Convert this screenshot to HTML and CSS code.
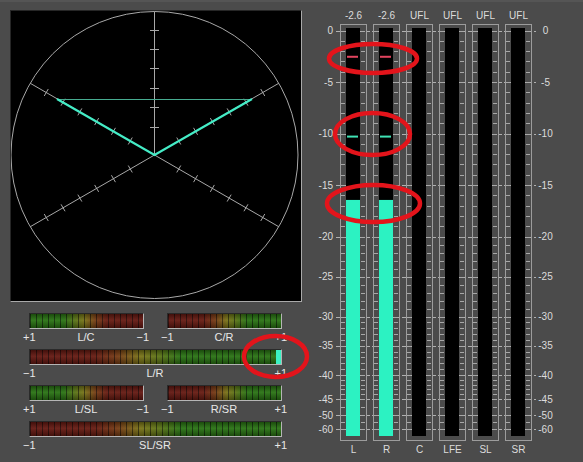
FILE: index.html
```html
<!DOCTYPE html>
<html>
<head>
<meta charset="utf-8">
<title>Surround Meter</title>
<link rel="stylesheet" href="styles.css">
</head>
<body>
<div class="app">
  <div class="left">
    <div class="scope">
      <svg class="scope-svg" width="290" height="290" viewBox="11 11 290 290">
        <circle class="grid" cx="154.5" cy="155" r="143.5"/>
        <path class="grid" d="M154.5 11.5V155M30.2 83.25L278.8 226.75M30.2 226.75L278.8 83.25"/>
        <path class="grid" d="M150 127.5h9M150 107.5h9M150 88.5h9M150 68.5h9M150 49.5h9M150 30.5h9
          M128.25 144.46l4-6.93M111.45 134.76l4-6.93M94.65 125.06l4-6.93M77.85 115.36l4-6.93M61.05 105.66l4-6.93M44.25 95.96l4-6.93
          M176.75 172.46l4-6.93M193.55 182.16l4-6.93M210.35 191.86l4-6.93M227.15 201.56l4-6.93M243.95 211.26l4-6.93M260.75 220.96l4-6.93
          M176.75 137.54l4 6.93M193.55 127.84l4 6.93M210.35 118.14l4 6.93M227.15 108.44l4 6.93M243.95 98.74l4 6.93M260.75 89.04l4 6.93
          M128.25 165.54l4 6.93M111.45 175.24l4 6.93M94.65 184.94l4 6.93M77.85 194.64l4 6.93M61.05 204.34l4 6.93M44.25 214.04l4 6.93"/>
        <path class="trace-h" d="M57 99.5H252"/>
        <path class="trace" d="M57 99L154.5 155L252 99"/>
      </svg>
    </div>
    <div class="corr">
      <div class="corr-row">
        <div class="cgroup">
          <div class="cbar short-gr"></div>
          <div class="clabels"><span>+1</span><span>L/C</span><span>−1</span></div>
        </div>
        <div class="cgroup">
          <div class="cbar short-rg"></div>
          <div class="clabels"><span>−1</span><span>C/R</span><span>+1</span></div>
        </div>
      </div>
      <div class="cgroup long">
        <div class="cbar long-rg"><span class="ind"></span></div>
        <div class="clabels"><span>−1</span><span>L/R</span><span>+1</span></div>
      </div>
      <div class="corr-row">
        <div class="cgroup">
          <div class="cbar short-gr"></div>
          <div class="clabels"><span>+1</span><span>L/SL</span><span>−1</span></div>
        </div>
        <div class="cgroup">
          <div class="cbar short-rg"></div>
          <div class="clabels"><span>−1</span><span>R/SR</span><span>+1</span></div>
        </div>
      </div>
      <div class="cgroup long">
        <div class="cbar long-rg"></div>
        <div class="clabels"><span>−1</span><span>SL/SR</span><span>+1</span></div>
      </div>
    </div>
  </div>
  <div class="meters">
    <div class="mrow head"><span>-2.6</span><span>-2.6</span><span>UFL</span><span>UFL</span><span>UFL</span><span>UFL</span></div>
    <svg id="meter" width="273" height="420" viewBox="310 24 273 420"></svg>
    <div class="mrow foot"><span>L</span><span>R</span><span>C</span><span>LFE</span><span>SL</span><span>SR</span></div>
  </div>
</div>
<svg class="marks" width="583" height="462" viewBox="0 0 583 462">
  <ellipse cx="373" cy="58.5" rx="44" ry="14.5"/>
  <ellipse cx="372.5" cy="134" rx="37.5" ry="21"/>
  <ellipse cx="373.5" cy="203.5" rx="46.5" ry="18.5"/>
  <ellipse cx="275.5" cy="356.5" rx="31.5" ry="20.5"/>
</svg>
<script src="script.js"></script>
</body>
</html>
```

FILE: styles.css
```css
* { box-sizing: border-box; margin: 0; padding: 0; }
html, body { width: 583px; height: 462px; overflow: hidden; background: #4b4b4b; }
body { font-family: "Liberation Sans", Arial, sans-serif; color: #e6e6e6; position: relative; }

.app { display: flex; width: 583px; height: 462px; box-shadow: inset 0 2px 0 #555555; }

.left { width: 310px; padding: 10px 0 0 10px; display: flex; flex-direction: column; }
.scope { width: 292px; height: 292px; background: #000; border: 1px solid; border-color: #262626 #a9a9a9 #a9a9a9 #262626; }
.scope-svg { display: block; }
.grid { fill: none; stroke: #a8a8a8; stroke-width: 1; }
.trace-h { fill: none; stroke: #47ab90; stroke-width: 1; }
.trace { fill: none; stroke: #44ecc6; stroke-width: 2.2; stroke-linejoin: miter; }

.corr { margin: 11px 0 0 13px; display: flex; flex-direction: column; gap: 4px; }
.corr-row { display: flex; gap: 12px; }
.cgroup { width: 126px; }
.cgroup.long { width: 264px; }
.cbar {
  height: 16px; margin: 0 5px 0 6px;
  border: 1px solid; border-color: #2a2a2a #b5b5b5 #b5b5b5 #2a2a2a;
  display: flex; justify-content: flex-end;
}
.short-gr {
  background:
    linear-gradient(180deg, rgba(0,0,0,.35), rgba(255,255,255,.05) 45%, rgba(0,0,0,.35)),
    repeating-linear-gradient(90deg, rgba(0,0,0,.55) 0 1px, transparent 1px 6px),
    linear-gradient(90deg, #2a7414 0%, #2a7414 30%, #5a7416 40%, #7a7418 48%, #763c14 58%, #681c12 68%, #641812 100%);
}
.short-rg {
  background:
    linear-gradient(180deg, rgba(0,0,0,.35), rgba(255,255,255,.05) 45%, rgba(0,0,0,.35)),
    repeating-linear-gradient(90deg, rgba(0,0,0,.55) 0 1px, transparent 1px 6px),
    linear-gradient(90deg, #641812 0%, #681c12 32%, #763c14 42%, #7a7418 52%, #5a7416 60%, #2a7414 70%, #2a7414 100%);
}
.long-rg {
  background:
    linear-gradient(180deg, rgba(0,0,0,.35), rgba(255,255,255,.05) 45%, rgba(0,0,0,.35)),
    repeating-linear-gradient(90deg, rgba(0,0,0,.55) 0 1px, transparent 1px 6px),
    linear-gradient(90deg, #641812 0%, #681c12 26%, #763c14 35%, #7a7418 44%, #5a7416 52%, #2a7414 60%, #2a7414 100%);
}
.ind { width: 5px; background: #3cf2c4; }
.clabels { display: grid; grid-template-columns: 1fr auto 1fr; font-size: 11px; line-height: 16px; color: #e8e8e8; }
.clabels span:first-child { justify-self: start; }
.clabels span:last-child { justify-self: end; }

.meters { width: 273px; padding-top: 8px; display: flex; flex-direction: column; }
.mrow { display: flex; gap: 6px; padding-left: 30px; font-size: 10px; color: #dcdcdc; }
.mrow span { width: 27px; text-align: center; }
.head { line-height: 16px; }
.foot { line-height: 12px; }
#meter { display: block; }
#meter .major { fill: none; stroke: #b0b0b0; stroke-width: 1; stroke-dasharray: 4 2; }
#meter .frame { fill: none; stroke: #9c9c9c; stroke-width: 1; }
#meter .tick { fill: none; stroke: #a8a8a8; stroke-width: 1; }
#meter .bar { fill: #000; }
#meter .fill { fill: #2cf2c2; }
#meter .peak { fill: #e2445f; }
#meter .hold { fill: #3fe2b4; }
#meter .scale { font-family: "Liberation Sans", Arial, sans-serif; font-size: 10px; fill: #dcdcdc; }

.marks { position: absolute; left: 0; top: 0; pointer-events: none; }
.marks ellipse { fill: none; stroke: #e3141b; stroke-width: 4.5; }
```

FILE: script.js
```js
(function () {
  var NS = 'http://www.w3.org/2000/svg';
  var svg = document.getElementById('meter');
  function el(tag, attrs, parent) {
    var e = document.createElementNS(NS, tag);
    for (var k in attrs) e.setAttribute(k, attrs[k]);
    (parent || svg).appendChild(e);
    return e;
  }
  var pts = [[0, 30.5], [-20, 236.5], [-30, 316.5], [-40, 375], [-45, 399], [-50, 415], [-60, 429.3]];
  function y(db) {
    for (var i = 0; i < pts.length - 1; i++) {
      var d0 = pts[i][0], y0 = pts[i][1], d1 = pts[i + 1][0], y1 = pts[i + 1][1];
      if (db <= d0 && db >= d1) return y0 + (y1 - y0) * (db - d0) / (d1 - d0);
    }
    return 436;
  }
  var majors = [0, -5, -10, -15, -20, -25, -30, -35, -40, -45, -50, -60];
  var minors = [];
  for (var d = -1; d > -45; d--) if (d % 5 !== 0) minors.push(d);
  minors.push(-47.5, -55);

  majors.forEach(function (d) {
    var yy = Math.round(y(d)) + 0.5;
    el('path', { d: 'M336 ' + yy + 'H536', 'class': 'major' });
    var t1 = el('text', { x: 333, y: (y(d) + 3.6).toFixed(1), 'text-anchor': 'end', 'class': 'scale' });
    t1.textContent = String(d);
    var t2 = el('text', { x: 545.5, y: (y(d) + 3.6).toFixed(1), 'text-anchor': 'middle', 'class': 'scale' });
    t2.textContent = String(d);
  });

  var chans = [
    { fill: -16.45, peak: -2.6, hold: -10.3 },
    { fill: -16.45, peak: -2.6, hold: -10.3 },
    {}, {}, {}, {}
  ];
  chans.forEach(function (c, i) {
    var x0 = 340 + 33 * i;
    el('rect', { x: x0 + 0.5, y: 24.5, width: 26, height: 416, 'class': 'frame' });
    var p = '';
    minors.concat(majors).forEach(function (d) {
      var yy = Math.round(y(d)) + 0.5;
      p += 'M' + (x0 + 1) + ' ' + yy + 'h4M' + (x0 + 21) + ' ' + yy + 'h4';
    });
    el('path', { d: p, 'class': 'tick' });
    el('rect', { x: x0 + 6, y: 28, width: 14, height: 408, 'class': 'bar' });
    if (c.fill !== undefined) {
      var yt = y(c.fill);
      el('rect', { x: x0 + 6, y: yt, width: 14, height: 436 - yt, 'class': 'fill' });
      el('rect', { x: x0 + 7, y: y(c.peak) - 1.5, width: 11, height: 2, 'class': 'peak' });
      el('rect', { x: x0 + 7, y: y(c.hold) - 1, width: 11, height: 2, 'class': 'hold' });
    }
  });
})();
```
